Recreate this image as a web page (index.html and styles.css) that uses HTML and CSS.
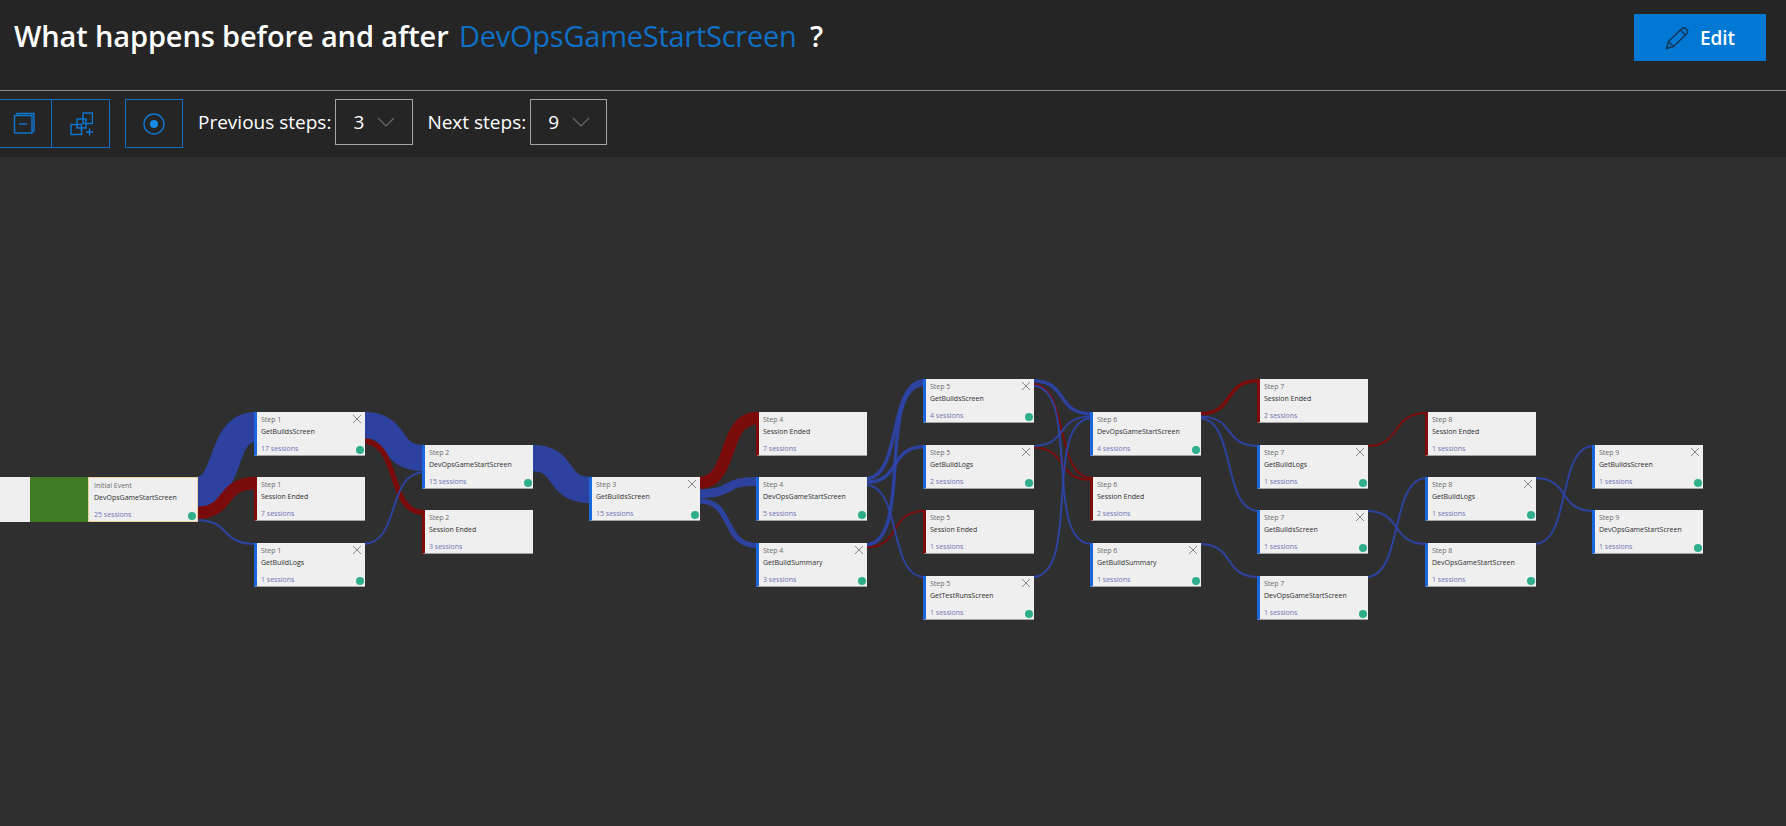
FILE: index.html
```html
<!DOCTYPE html>
<html lang="en">
<head>
    <meta charset="UTF-8">
    <title>User Flows</title>
    <link rel="stylesheet" href="styles.css">
</head>
<body>
    <header class="title-bar">
        <h1 class="title">What happens before and after <a class="title-link">DevOpsGameStartScreen</a> <span class="title-mark">?</span></h1>
        <button class="edit-btn" type="button">
            <svg class="edit-icon" viewBox="0 0 24 24"><path d="M1.5 22.5 L3.5 15.5 L17 2.5 Q19 1 21 3 L22 4 Q23.5 6 21.5 8 L8.5 20.5 Z M3.5 15.5 L8.5 20.5 M15.5 4 L20 9"/></svg>
            Edit
        </button>
    </header>

    <div class="toolbar">
        <div class="btn-group">
            <button class="tool-btn" type="button">
                <svg class="tool-icon" viewBox="0 0 24 24"><path d="M5 3 V1.5 H22 V19 H20"/><rect x="2.5" y="3.5" width="17.5" height="17.5"/><path d="M7 12 H15"/></svg>
            </button>
            <button class="tool-btn tool-btn-wide" type="button">
                <svg class="tool-icon" viewBox="0 0 24 24"><rect x="14" y="1" width="9.5" height="10.5"/><rect x="8" y="7" width="9" height="9"/><rect x="2" y="12.5" width="10.5" height="10"/><path d="M17 20 H24 M20.5 16.5 V23.5"/></svg>
            </button>
        </div>
        <button class="tool-btn tool-btn-solo" type="button">
            <svg class="tool-icon" viewBox="0 0 24 24"><circle cx="12" cy="12" r="10"/><circle class="tool-dot" cx="12" cy="12" r="4"/></svg>
        </button>
        <span class="step-label">Previous steps:</span>
        <div class="step-select step-select-prev">
            <span>3</span>
            <svg class="chevron" viewBox="0 0 18 10"><path d="M1 1 L9 9 L17 1"/></svg>
        </div>
        <span class="step-label step-label-next">Next steps:</span>
        <div class="step-select step-select-next">
            <span>9</span>
            <svg class="chevron" viewBox="0 0 18 10"><path d="M1 1 L9 9 L17 1"/></svg>
        </div>
    </div>

    <main class="canvas">
        <svg class="edges" viewBox="0 157 1786 669">
            <!-- initial to step 1 -->
            <path class="blue" stroke-width="30" d="M195 492 C233 492 218 427 256 427"/>
            <path class="red" stroke-width="12.3" d="M195 513 C233 513 218 483 256 483"/>
            <path class="blue" stroke-width="2" d="M195 520 C233 520 218 544 256 544"/>
            <!-- step 1 to 2 -->
            <path class="blue" stroke-width="26.4" d="M363 425 C401 425 386 458 424 458"/>
            <path class="red" stroke-width="5.3" d="M363 441 C401 441 386 512.6 424 512.6"/>
            <path class="blue" stroke-width="2" d="M363 544 C401 544 386 472.3 424 472.3"/>
            <!-- step 2 to 3 -->
            <path class="blue" stroke-width="26.4" d="M531 458 C569 458 553 490 591 490"/>
            <!-- step 3 to 4 -->
            <path class="red" stroke-width="12.3" d="M698 483 C736 483 720 418 758 418"/>
            <path class="blue" stroke-width="8.8" d="M698 493.7 C736 493.7 720 481.4 758 481.4"/>
            <path class="blue" stroke-width="5.3" d="M698 500.7 C736 500.7 720 545.6 758 545.6"/>
            <!-- step 4 to 5 -->
            <path class="red" stroke-width="2" d="M865 547.4 C903 547.4 887 511 925 511"/>
            <path class="blue" stroke-width="3.5" d="M865 478.8 C903 478.8 887 380.8 925 380.8"/>
            <path class="blue" stroke-width="3.5" d="M865 482.3 C903 482.3 887 446.8 925 446.8"/>
            <path class="blue" stroke-width="2" d="M865 485 C903 485 887 577 925 577"/>
            <path class="blue" stroke-width="3.5" d="M865 544.8 C915 544.8 875 384.3 925 384.3"/>
            <!-- step 5 to 6 -->
            <path class="red" stroke-width="2" d="M1032 384 C1070 384 1054 478 1092 478"/>
            <path class="red" stroke-width="2" d="M1032 447.6 C1070 447.6 1054 480 1092 480"/>
            <path class="blue" stroke-width="3.5" d="M1032 380.8 C1070 380.8 1054 413.8 1092 413.8"/>
            <path class="blue" stroke-width="2" d="M1032 385.6 C1082 385.6 1042 544 1092 544"/>
            <path class="blue" stroke-width="2" d="M1032 446 C1070 446 1054 416.4 1092 416.4"/>
            <path class="blue" stroke-width="2" d="M1032 577 C1082 577 1042 418.2 1092 418.2"/>
            <!-- step 6 to 7 -->
            <path class="red" stroke-width="3.5" d="M1199 413.8 C1237 413.8 1221 380.8 1259 380.8"/>
            <path class="blue" stroke-width="2" d="M1199 416.4 C1237 416.4 1221 446 1259 446"/>
            <path class="blue" stroke-width="2" d="M1199 418.2 C1237 418.2 1221 511 1259 511"/>
            <path class="blue" stroke-width="2" d="M1199 544 C1237 544 1221 577 1259 577"/>
            <!-- step 7 to 8 -->
            <path class="red" stroke-width="2" d="M1366 446 C1404 446 1389 413 1427 413"/>
            <path class="blue" stroke-width="2" d="M1366 511 C1404 511 1389 544 1427 544"/>
            <path class="blue" stroke-width="2" d="M1366 577 C1404 577 1389 478 1427 478"/>
            <!-- step 8 to 9 -->
            <path class="blue" stroke-width="2" d="M1534 478 C1572 478 1556 511 1594 511"/>
            <path class="blue" stroke-width="2" d="M1534 544 C1572 544 1556 446 1594 446"/>
        </svg>

        <div class="node-stub"></div>
        <div class="node-green"></div>
        <div class="node node-initial">
            <span class="node-step">Initial Event</span>
            <span class="node-name">DevOpsGameStartScreen</span>
            <span class="node-count">25 sessions</span>
            <i class="node-dot"></i>
        </div>

        <div class="node col-1 row-b">
            <span class="node-step">Step 1</span><span class="node-name">GetBuildsScreen</span><span class="node-count">17 sessions</span>
            <svg class="node-close" viewBox="0 0 8 8"><path d="M0 0 L8 8 M8 0 L0 8"/></svg><i class="node-dot"></i>
        </div>
        <div class="node node-end col-1 row-d">
            <span class="node-step">Step 1</span><span class="node-name">Session Ended</span><span class="node-count">7 sessions</span>
        </div>
        <div class="node col-1 row-f">
            <span class="node-step">Step 1</span><span class="node-name">GetBuildLogs</span><span class="node-count">1 sessions</span>
            <svg class="node-close" viewBox="0 0 8 8"><path d="M0 0 L8 8 M8 0 L0 8"/></svg><i class="node-dot"></i>
        </div>

        <div class="node col-2 row-c">
            <span class="node-step">Step 2</span><span class="node-name">DevOpsGameStartScreen</span><span class="node-count">15 sessions</span>
            <i class="node-dot"></i>
        </div>
        <div class="node node-end col-2 row-e">
            <span class="node-step">Step 2</span><span class="node-name">Session Ended</span><span class="node-count">3 sessions</span>
        </div>

        <div class="node col-3 row-d">
            <span class="node-step">Step 3</span><span class="node-name">GetBuildsScreen</span><span class="node-count">15 sessions</span>
            <svg class="node-close" viewBox="0 0 8 8"><path d="M0 0 L8 8 M8 0 L0 8"/></svg><i class="node-dot"></i>
        </div>

        <div class="node node-end col-4 row-b">
            <span class="node-step">Step 4</span><span class="node-name">Session Ended</span><span class="node-count">7 sessions</span>
        </div>
        <div class="node col-4 row-d">
            <span class="node-step">Step 4</span><span class="node-name">DevOpsGameStartScreen</span><span class="node-count">5 sessions</span>
            <i class="node-dot"></i>
        </div>
        <div class="node col-4 row-f">
            <span class="node-step">Step 4</span><span class="node-name">GetBuildSummary</span><span class="node-count">3 sessions</span>
            <svg class="node-close" viewBox="0 0 8 8"><path d="M0 0 L8 8 M8 0 L0 8"/></svg><i class="node-dot"></i>
        </div>

        <div class="node col-5 row-a">
            <span class="node-step">Step 5</span><span class="node-name">GetBuildsScreen</span><span class="node-count">4 sessions</span>
            <svg class="node-close" viewBox="0 0 8 8"><path d="M0 0 L8 8 M8 0 L0 8"/></svg><i class="node-dot"></i>
        </div>
        <div class="node col-5 row-c">
            <span class="node-step">Step 5</span><span class="node-name">GetBuildLogs</span><span class="node-count">2 sessions</span>
            <svg class="node-close" viewBox="0 0 8 8"><path d="M0 0 L8 8 M8 0 L0 8"/></svg><i class="node-dot"></i>
        </div>
        <div class="node node-end col-5 row-e">
            <span class="node-step">Step 5</span><span class="node-name">Session Ended</span><span class="node-count">1 sessions</span>
        </div>
        <div class="node col-5 row-g">
            <span class="node-step">Step 5</span><span class="node-name">GetTestRunsScreen</span><span class="node-count">1 sessions</span>
            <svg class="node-close" viewBox="0 0 8 8"><path d="M0 0 L8 8 M8 0 L0 8"/></svg><i class="node-dot"></i>
        </div>

        <div class="node col-6 row-b">
            <span class="node-step">Step 6</span><span class="node-name">DevOpsGameStartScreen</span><span class="node-count">4 sessions</span>
            <i class="node-dot"></i>
        </div>
        <div class="node node-end col-6 row-d">
            <span class="node-step">Step 6</span><span class="node-name">Session Ended</span><span class="node-count">2 sessions</span>
        </div>
        <div class="node col-6 row-f">
            <span class="node-step">Step 6</span><span class="node-name">GetBuildSummary</span><span class="node-count">1 sessions</span>
            <svg class="node-close" viewBox="0 0 8 8"><path d="M0 0 L8 8 M8 0 L0 8"/></svg><i class="node-dot"></i>
        </div>

        <div class="node node-end col-7 row-a">
            <span class="node-step">Step 7</span><span class="node-name">Session Ended</span><span class="node-count">2 sessions</span>
        </div>
        <div class="node col-7 row-c">
            <span class="node-step">Step 7</span><span class="node-name">GetBuildLogs</span><span class="node-count">1 sessions</span>
            <svg class="node-close" viewBox="0 0 8 8"><path d="M0 0 L8 8 M8 0 L0 8"/></svg><i class="node-dot"></i>
        </div>
        <div class="node col-7 row-e">
            <span class="node-step">Step 7</span><span class="node-name">GetBuildsScreen</span><span class="node-count">1 sessions</span>
            <svg class="node-close" viewBox="0 0 8 8"><path d="M0 0 L8 8 M8 0 L0 8"/></svg><i class="node-dot"></i>
        </div>
        <div class="node col-7 row-g">
            <span class="node-step">Step 7</span><span class="node-name">DevOpsGameStartScreen</span><span class="node-count">1 sessions</span>
            <i class="node-dot"></i>
        </div>

        <div class="node node-end col-8 row-b">
            <span class="node-step">Step 8</span><span class="node-name">Session Ended</span><span class="node-count">1 sessions</span>
        </div>
        <div class="node col-8 row-d">
            <span class="node-step">Step 8</span><span class="node-name">GetBuildLogs</span><span class="node-count">1 sessions</span>
            <svg class="node-close" viewBox="0 0 8 8"><path d="M0 0 L8 8 M8 0 L0 8"/></svg><i class="node-dot"></i>
        </div>
        <div class="node col-8 row-f">
            <span class="node-step">Step 8</span><span class="node-name">DevOpsGameStartScreen</span><span class="node-count">1 sessions</span>
            <i class="node-dot"></i>
        </div>

        <div class="node col-9 row-c">
            <span class="node-step">Step 9</span><span class="node-name">GetBuildsScreen</span><span class="node-count">1 sessions</span>
            <svg class="node-close" viewBox="0 0 8 8"><path d="M0 0 L8 8 M8 0 L0 8"/></svg><i class="node-dot"></i>
        </div>
        <div class="node col-9 row-e">
            <span class="node-step">Step 9</span><span class="node-name">DevOpsGameStartScreen</span><span class="node-count">1 sessions</span>
            <i class="node-dot"></i>
        </div>
    </main>
</body>
</html>
```

FILE: styles.css
```css
* {
    box-sizing: border-box;
}

html, body {
    height: 100%;
}

body {
    margin: 0;
    display: flex;
    flex-direction: column;
    overflow: hidden;
    font-family: "Open Sans", "Liberation Sans", sans-serif;
    background: #252525;
    color: #fff;
}

/* header */
.title-bar {
    height: 91px;
    padding: 13px 20px 0 14px;
    display: flex;
    justify-content: space-between;
    align-items: flex-start;
    border-bottom: 1px solid #8a8a8a;
}

.title {
    margin: 0;
    font-size: 29px;
    line-height: 46px;
    font-weight: 600;
    letter-spacing: -0.13px;
    white-space: nowrap;
}

.title-link {
    margin: 0 6px 0 3px;
    font-weight: 400;
    letter-spacing: -0.25px;
    color: #0f6fc6;
}

.edit-btn {
    width: 132px;
    height: 47px;
    margin-top: 1px;
    display: flex;
    align-items: center;
    justify-content: center;
    gap: 11px;
    border: none;
    background: #0078d4;
    color: #fff;
    font-family: inherit;
    font-size: 19px;
    font-weight: 600;
}

.edit-icon {
    width: 24px;
    height: 24px;
    fill: none;
    stroke: #17375a;
    stroke-width: 1.5;
}

/* toolbar */
.toolbar {
    height: 66px;
    padding-top: 8px;
    display: flex;
    align-items: flex-start;
}

.btn-group {
    display: flex;
    margin-left: -4px;
}

.tool-btn {
    width: 56px;
    height: 49px;
    padding: 0;
    display: flex;
    align-items: center;
    justify-content: center;
    border: 1px solid #0f6fc6;
    background: none;
}

.tool-btn-wide {
    width: 58px;
    border-left: none;
}

.tool-btn-solo {
    width: 58px;
    margin-left: 15px;
}

.tool-icon {
    width: 24px;
    height: 24px;
    fill: none;
    stroke: #0f78d4;
    stroke-width: 1.4;
}

.tool-dot {
    fill: #1a8be8;
    stroke: none;
}

.step-label {
    margin-left: 15px;
    font-size: 19px;
    line-height: 46px;
    white-space: nowrap;
}

.step-label-next {
    margin-left: 14px;
}

.step-select {
    height: 46px;
    margin-left: 4px;
    padding-left: 17px;
    display: flex;
    align-items: center;
    gap: 13px;
    border: 1px solid #a6a6a6;
    font-size: 19px;
}

.step-select-prev {
    width: 78px;
}

.step-select-next {
    width: 77px;
}

.chevron {
    width: 18px;
    height: 10px;
    fill: none;
    stroke: #6a6a6a;
    stroke-width: 1.2;
}

/* flow canvas */
.canvas {
    position: relative;
    flex: 1;
    background: #2f2f2f;
}

.edges {
    position: absolute;
    left: 0;
    top: 0;
    width: 1786px;
    height: 669px;
    fill: none;
}

.blue {
    stroke: #2c45ab;
    stroke-opacity: 0.9;
}

.red {
    stroke: #7e0a0a;
    stroke-opacity: 0.95;
}

.node-stub {
    position: absolute;
    left: 0;
    top: 320px;
    width: 30px;
    height: 45px;
    background: #efefef;
}

.node-green {
    position: absolute;
    left: 30px;
    top: 320px;
    width: 58px;
    height: 45px;
    background: #417a25;
}

.node {
    position: absolute;
    width: 111px;
    height: 44px;
    padding: 3px 0 1px 4px;
    display: flex;
    flex-direction: column;
    background: #efefef;
    border-left: 3px solid #1c66dc;
    border-bottom: 1px solid #a3a3a3;
}

.node-end {
    border-left-color: #7e0a0a;
}

.node-initial {
    left: 88px;
    top: 320px;
    width: 110px;
    height: 45px;
    padding-left: 5px;
    border: 1px solid #e9cf9a;
}

.node-step {
    font-size: 7px;
    line-height: 9px;
    color: #6b6b6b;
}

.node-name {
    margin-top: 3px;
    font-size: 7px;
    line-height: 10px;
    font-weight: 500;
    color: #2e2e2e;
    white-space: nowrap;
}

.node-count {
    margin-top: auto;
    font-size: 7px;
    line-height: 10px;
    color: #6f74b4;
}

.node-close {
    position: absolute;
    right: 4px;
    top: 3px;
    width: 8px;
    height: 8px;
    fill: none;
    stroke: #7c7c7c;
    stroke-width: 0.9;
}

.node-dot {
    position: absolute;
    right: 1px;
    bottom: 1px;
    width: 8px;
    height: 8px;
    border-radius: 50%;
    background: #2fae8c;
}

.col-1 { left: 254px; }
.col-2 { left: 422px; }
.col-3 { left: 589px; }
.col-4 { left: 756px; }
.col-5 { left: 923px; }
.col-6 { left: 1090px; }
.col-7 { left: 1257px; }
.col-8 { left: 1425px; }
.col-9 { left: 1592px; }

.row-a { top: 222px; }
.row-b { top: 255px; }
.row-c { top: 288px; }
.row-d { top: 320px; }
.row-e { top: 353px; }
.row-f { top: 386px; }
.row-g { top: 419px; }
```
